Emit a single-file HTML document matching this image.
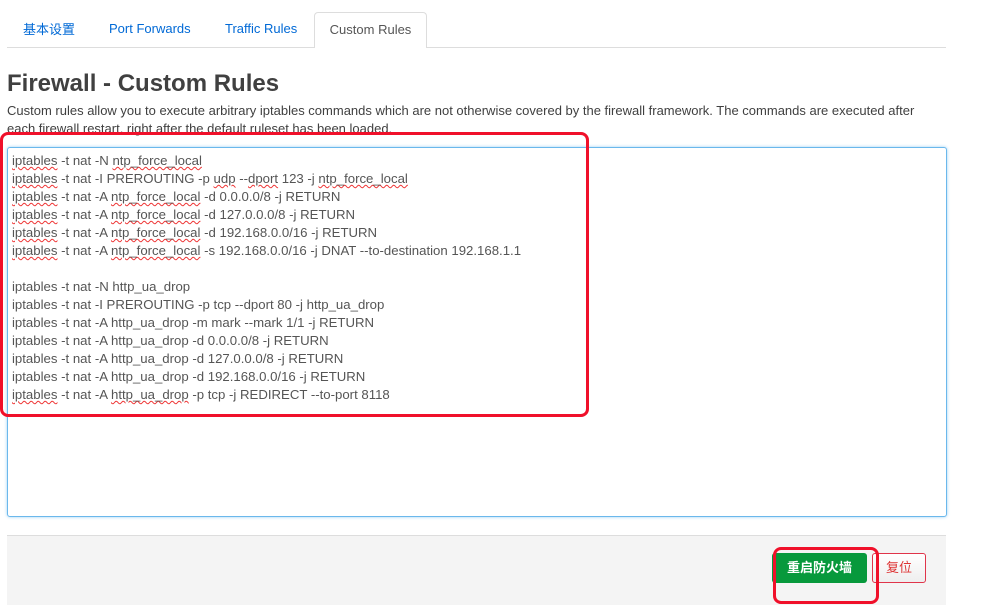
<!DOCTYPE html>
<html><head><meta charset="utf-8"><style>
body{margin:0;width:991px;height:604px;background:#fff;font-family:"Liberation Sans","Noto Sans CJK SC",sans-serif;position:relative;overflow:hidden;color:#404040}
.tabs{position:absolute;left:7px;top:47px;width:939px;border-top:1px solid #ddd}
.tab{position:absolute;top:21px;height:16px;line-height:16px;font-size:13px;color:#0069d6}
.tabact{position:absolute;left:314px;top:12px;width:113px;height:36px;border:1px solid #ddd;border-bottom:none;border-radius:4px 4px 0 0;background:#fff;font-size:13px;color:#555;text-align:center;line-height:34px;box-sizing:border-box}
h1{position:absolute;left:7px;top:70px;margin:0;font-size:24px;font-weight:bold;color:#404040}
.desc{position:absolute;left:7px;top:102px;width:925px;font-size:13px;line-height:18px;color:#404040}
.ta{position:absolute;left:7px;top:147px;width:940px;height:370px;border:1px solid #6bb8ec;border-radius:3px;box-sizing:border-box;box-shadow:0 0 3px #9cd0f3;background:#fff}
.code{position:absolute;left:12px;top:152px;font-size:13.2px;line-height:18px;color:#555;white-space:pre}
.u{text-decoration:underline wavy #e33;text-decoration-thickness:1px}
.foot{position:absolute;left:7px;top:535px;width:939px;height:69px;background:#f4f4f4;border-top:1px solid #ddd}
.btn1{position:absolute;left:772px;top:553px;width:95px;height:30px;background:#07993c;border-radius:3px;color:#fff;font-size:13px;font-weight:bold;text-align:center;line-height:30px}
.btn2{position:absolute;left:872px;top:553px;width:54px;height:30px;background:linear-gradient(#fff,#eee);border:1px solid #e0344a;border-radius:3px;box-sizing:border-box;color:#d33;font-size:13px;text-align:center;line-height:28px}
.rb{position:absolute;border:3px solid #f0102a;border-radius:8px;box-sizing:border-box}
</style></head><body>
<div class="tabs"></div>
<div class="tab" style="left:23px;top:22px">基本设置</div>
<div class="tab" style="left:109px">Port Forwards</div>
<div class="tab" style="left:225px">Traffic Rules</div>
<div class="tabact">Custom Rules</div>
<h1>Firewall - Custom Rules</h1>
<div class="desc">Custom rules allow you to execute arbitrary iptables commands which are not otherwise covered by the firewall framework. The commands are executed after each firewall restart, right after the default ruleset has been loaded.</div>
<div class="ta"></div>
<div class="code"><span class="u">iptables</span> -t nat -N <span class="u">ntp_force_local</span>
<span class="u">iptables</span> -t nat -I PREROUTING -p <span class="u">udp</span> --<span class="u">dport</span> 123 -j <span class="u">ntp_force_local</span>
<span class="u">iptables</span> -t nat -A <span class="u">ntp_force_local</span> -d 0.0.0.0/8 -j RETURN
<span class="u">iptables</span> -t nat -A <span class="u">ntp_force_local</span> -d 127.0.0.0/8 -j RETURN
<span class="u">iptables</span> -t nat -A <span class="u">ntp_force_local</span> -d 192.168.0.0/16 -j RETURN
<span class="u">iptables</span> -t nat -A <span class="u">ntp_force_local</span> -s 192.168.0.0/16 -j DNAT --to-destination 192.168.1.1

iptables -t nat -N http_ua_drop
iptables -t nat -I PREROUTING -p tcp --dport 80 -j http_ua_drop
iptables -t nat -A http_ua_drop -m mark --mark 1/1 -j RETURN
iptables -t nat -A http_ua_drop -d 0.0.0.0/8 -j RETURN
iptables -t nat -A http_ua_drop -d 127.0.0.0/8 -j RETURN
iptables -t nat -A http_ua_drop -d 192.168.0.0/16 -j RETURN
<span class="u">iptables</span> -t nat -A <span class="u">http_ua_drop</span> -p tcp -j REDIRECT --to-port 8118</div>
<div class="rb" style="left:0;top:132px;width:589px;height:285px"></div>
<div class="foot"></div>
<div class="btn1">重启防火墙</div>
<div class="btn2">复位</div>
<div class="rb" style="left:773px;top:547px;width:106px;height:57px"></div>
</body></html>
